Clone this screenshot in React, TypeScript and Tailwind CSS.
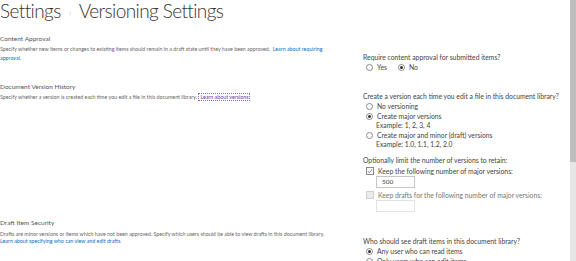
import React from "react";

const Radio: React.FC<{ checked?: boolean }> = ({ checked }) => (
  <span className="inline-flex h-[7px] w-[7px] shrink-0 items-center justify-center rounded-full border border-[#8a8a8a] bg-white">
    {checked && <span className="h-[3px] w-[3px] rounded-full bg-[#333]" />}
  </span>
);

const Check: React.FC<{ checked?: boolean }> = ({ checked }) => (
  <span
    className={`inline-flex h-[8px] w-[8px] shrink-0 items-center justify-center border ${
      checked ? "border-[#8a8a8a] bg-white" : "border-[#d0d0d0] bg-[#ececec]"
    }`}
  >
    {checked && (
      <svg viewBox="0 0 8 8" className="h-[6px] w-[6px]">
        <path d="M1 4.2 L3.1 6.2 L7 1.6" fill="none" stroke="#555" strokeWidth="1" />
      </svg>
    )}
  </span>
);

const RadioRow: React.FC<{ checked?: boolean; label: string; example?: string }> = ({
  checked,
  label,
  example,
}) => (
  <div className="flex flex-col">
    <div className="flex h-[10px] items-center gap-[4px] pl-[3px]">
      <Radio checked={checked} />
      <span>{label}</span>
    </div>
    {example && <div className="h-[9px] pl-[13px] leading-[9px]">{example}</div>}
  </div>
);

export default function App() {
  return (
    <div className="flex h-[261px] w-[576px] overflow-hidden bg-white font-['Lato',sans-serif] text-[#444]">
      <div className="flex-1">
        <h1 className="flex h-[28px] items-start gap-[8px] text-[19px] font-light leading-[22px] tracking-[-0.6px] text-[#333]">
          <span>Settings</span>
          <span className="text-[10px] leading-[24px] text-[#aaa]">›</span>
          <span>Versioning Settings</span>
        </h1>

        {/* content approval */}
        <section className="flex pt-[6px]">
          <div className="w-[363px] pr-[4px]">
            <h2 className="h-[10px] text-[6.5px] leading-[10px] text-[#555]">Content Approval</h2>
            <p className="mt-[1px] w-[334px] text-[5.3px] leading-[9px] text-[#666]">
              Specify whether new items or changes to existing items should remain in a draft state until they have
              been approved.&nbsp;{" "}
              <span className="text-[#0072c6]">Learn about requiring approval.</span>
            </p>
          </div>
          <div className="flex-1 pt-[18px] text-[6.8px] leading-[10px]">
            <div>Require content approval for submitted items?</div>
            <div className="flex h-[10px] items-center gap-[4px] pl-[3px]">
              <Radio />
              <span className="mr-[7px]">Yes</span>
              <Radio checked />
              <span>No</span>
            </div>
          </div>
        </section>

        {/* version history */}
        <section className="flex">
          <div className="w-[363px] pr-[4px] pt-[10px]">
            <h2 className="h-[10px] text-[6.5px] leading-[10px] text-[#555]">Document Version History</h2>
            <p className="mt-[1px] text-[5.3px] leading-[8px] text-[#666]">
              Specify whether a version is created each time you edit a file in this document library.{" "}
              <span className="border border-dotted border-[#8a6fb0] px-[1px] text-[#5c3d8f]">Learn about versions</span>
            </p>
          </div>
          <div className="flex-1 pt-[19px] text-[6.8px] leading-[10px]">
            <div>Create a version each time you edit a file in this document library?</div>
            <RadioRow label="No versioning" />
            <RadioRow checked label="Create major versions" example="Example: 1, 2, 3, 4" />
            <RadioRow label="Create major and minor (draft) versions" example="Example: 1.0, 1.1, 1.2, 2.0" />

            <div className="mt-[6px]">Optionally limit the number of versions to retain:</div>
            <div className="flex h-[11px] items-center gap-[4px] pl-[3px]">
              <Check checked />
              <span>Keep the following number of major versions:</span>
            </div>
            <div className="ml-[13px] flex h-[12px] w-[39px] items-center border border-[#c6c6c6] pl-[5px] text-[6.5px]">
              500
            </div>
            <div className="mt-[1px] flex h-[11px] items-center gap-[4px] pl-[3px] text-[#777]">
              <Check />
              <span>Keep drafts for the following number of major versions:</span>
            </div>
            <div className="ml-[13px] h-[12px] w-[39px] border border-[#e2e2e2]" />
          </div>
        </section>

        {/* draft item security */}
        <section className="flex pt-[6px]">
          <div className="w-[363px] pr-[4px]">
            <h2 className="h-[10px] text-[6.5px] leading-[10px] text-[#555]">Draft Item Security</h2>
            <p className="mt-[3px] text-[5.3px] leading-[7px] text-[#666]">
              Drafts are minor versions or items which have not been approved. Specify which users should be able to
              view drafts in this document library.
              <br />
              <span className="text-[#0072c6]">Learn about specifying who can view and edit drafts.</span>
            </p>
          </div>
          <div className="flex-1 pt-[18px] text-[6.8px] leading-[10px]">
            <div>Who should see draft items in this document library?</div>
            <RadioRow checked label="Any user who can read items" />
            <RadioRow label="Only users who can edit items" />
          </div>
        </section>
      </div>

      {/* scrollbar */}
      <div className="flex w-[6px] flex-col bg-[#e6e6e6]">
        <div className="h-[162px] bg-[#bdbdbd]" />
      </div>
    </div>
  );
}
